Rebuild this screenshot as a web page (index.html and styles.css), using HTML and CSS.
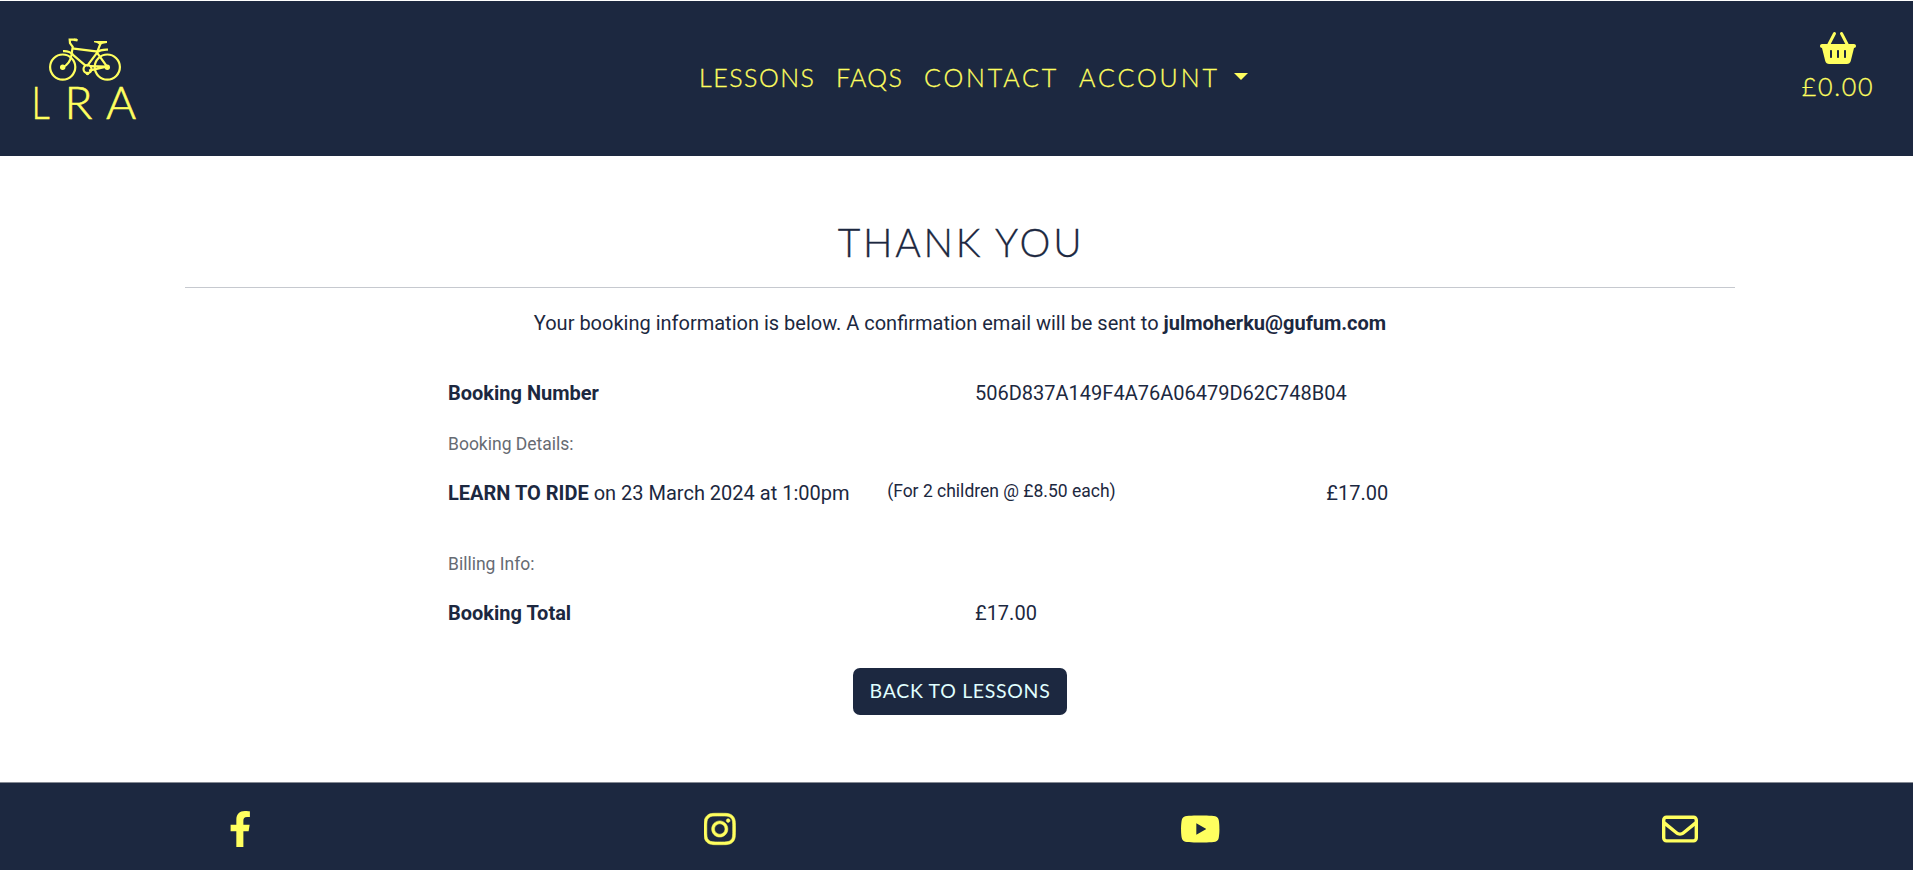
FILE: index.html
```html
<!DOCTYPE html>
<html lang="en">
<head>
<meta charset="utf-8">
<title>Thank You</title>
<link rel="stylesheet" href="styles.css">
</head>
<body>
<header class="header">
  <a class="logo" href="#">
    <svg width="120" height="104" viewBox="30 34 120 104" role="img" aria-label="LRA">
      <g transform="translate(0 -.4)" fill="none" stroke="currentColor" stroke-width="2.200">
        <circle cx="62.700" cy="67.500" r="12.600"/>
        <circle cx="107.300" cy="67.500" r="12.600"/>
        <circle cx="87.500" cy="69.500" r="4"/>
        <path d="M77.500 40.700l-3.500-.7h-4.300l.3 3.500 2.700 3.700-1.200 8c-1 6-4 10.500-9 12.500"/>
        <path d="M72 48.700l26 3.300M71.500 54l14 12M97.500 52.500l-10.500 14M101 42.500l-4 10.500 10 14-18 4M90 66.500l17 .5M63 51.500q6-.5 10 3.500M96 53q5-3.500 12-3"/>
        <path d="M74 39.500h3v1.500h-3z" stroke-width="1"/>
      </g>
      <g fill="currentColor">
        <path d="M94 41h13v2q-5 .3-7 2-3-2.500-6-2.800z"/>
        <circle cx="62.700" cy="67.200" r="2.700"/><circle cx="107.300" cy="67.200" r="2.700"/>
        <circle cx="87.500" cy="73.500" r="1.800"/>
        <g class="logo-text">
          <text transform="translate(31.500 119) scale(.78 1)">L</text>
          <text x="64.500" y="119">R</text>
          <text x="106" y="119">A</text>
        </g>
      </g>
    </svg>
  </a>
  <nav class="nav">
    <a class="w-lessons" href="#">LESSONS</a>
    <a class="w-faqs" href="#">FAQS</a>
    <a class="w-contact" href="#">CONTACT</a>
    <a class="w-account" href="#">ACCOUNT</a>
    <span class="caret"></span>
  </nav>
  <a class="basket" href="#">
    <svg width="36" height="32" viewBox="0 0 576 512" fill="currentColor"><path d="M253.300 35.100c6.100-11.800 1.500-26.300-10.200-32.400s-26.300-1.500-32.400 10.200L117.600 192H32c-17.700 0-32 14.300-32 32s14.300 32 32 32L83.900 463.500C91 492 116.600 512 146 512H430c29.400 0 55-20 62.100-48.500L544 256c17.700 0 32-14.300 32-32s-14.300-32-32-32H458.400L365.300 12.900C359.200 1.200 344.700-3.400 332.900 2.700s-16.300 20.600-10.200 32.400L404.300 192H171.700L253.300 35.100zM192 304v96c0 8.800-7.200 16-16 16s-16-7.200-16-16V304c0-8.800 7.200-16 16-16s16 7.200 16 16zm96-16c8.800 0 16 7.200 16 16v96c0 8.800-7.200 16-16 16s-16-7.200-16-16V304c0-8.800 7.200-16 16-16zm128 16v96c0 8.800-7.200 16-16 16s-16-7.200-16-16V304c0-8.800 7.200-16 16-16s16 7.200 16 16z"/></svg>
    <span>£0.00</span>
  </a>
</header>
<main class="main">
  <h2 class="title">THANK YOU</h2>
  <hr class="rule">
  <p class="intro">Your booking information is below. A confirmation email will be sent to <strong>julmoherku@gufum.com</strong></p>
  <section class="details">
    <div class="row half number"><strong>Booking Number</strong><span>506D837A149F4A76A06479D62C748B04</span></div>
    <p class="label">Booking Details:</p>
    <div class="row lesson"><span><strong>LEARN TO RIDE</strong> on 23 March 2024 at 1:00pm</span><small>(For 2 children @ £8.50 each)</small><span>£17.00</span></div>
    <p class="label">Billing Info:</p>
    <div class="row half"><strong>Booking Total</strong><span>£17.00</span></div>
  </section>
  <a class="button" href="#"><span>BACK TO LESSONS</span></a>
</main>
<footer class="footer">
  <a href="#"><svg height="36" width="22.500" viewBox="0 0 320 512" fill="currentColor"><path d="M279.140 288l14.220-92.660h-88.910v-60.130c0-25.350 12.420-50.060 52.240-50.060h40.420V6.260S260.430 0 225.360 0c-73.220 0-121.080 44.380-121.080 124.720v70.620H22.890V288h81.390v224h100.170V288z"/></svg></a>
  <a href="#"><svg height="36" width="31.500" viewBox="0 0 448 512" fill="currentColor" stroke="currentColor" stroke-width="8"><path d="M224.100 141c-63.600 0-114.900 51.300-114.900 114.900s51.300 114.900 114.900 114.900S339 319.500 339 255.900 287.700 141 224.100 141zm0 189.600c-41.100 0-74.700-33.500-74.700-74.700s33.500-74.700 74.700-74.700 74.700 33.500 74.700 74.700-33.600 74.700-74.700 74.700zm146.400-194.300c0 14.900-12 26.800-26.800 26.800-14.900 0-26.800-12-26.800-26.800s12-26.800 26.800-26.800 26.800 12 26.800 26.800zm76.100 27.200c-1.700-35.900-9.900-67.700-36.200-93.900-26.200-26.200-58-34.400-93.900-36.200-37-2.100-147.900-2.100-184.900 0-35.800 1.700-67.600 9.900-93.900 36.100s-34.400 58-36.200 93.900c-2.100 37-2.100 147.900 0 184.900 1.700 35.900 9.900 67.700 36.200 93.900s58 34.400 93.900 36.200c37 2.100 147.900 2.100 184.900 0 35.900-1.700 67.700-9.900 93.900-36.200 26.200-26.200 34.400-58 36.200-93.900 2.100-37 2.100-147.800 0-184.800zM398.800 388c-7.800 19.600-22.900 34.700-42.600 42.600-29.500 11.700-99.500 9-132.100 9s-102.700 2.600-132.100-9c-19.600-7.800-34.700-22.900-42.600-42.600-11.700-29.500-9-99.500-9-132.100s-2.600-102.700 9-132.100c7.800-19.600 22.900-34.700 42.600-42.600 29.500-11.700 99.500-9 132.100-9s102.700-2.600 132.100 9c19.600 7.800 34.700 22.900 42.600 42.600 11.700 29.500 9 99.500 9 132.100s2.700 102.700-9 132.100z"/></svg></a>
  <a href="#"><svg height="36" width="40.500" viewBox="0 0 576 512" fill="currentColor"><path d="M549.655 124.083c-6.281-23.650-24.787-42.276-48.284-48.597C458.781 64 288 64 288 64S117.220 64 74.629 75.486c-23.497 6.322-42.003 24.947-48.284 48.597-11.412 42.867-11.412 132.305-11.412 132.305s0 89.438 11.412 132.305c6.281 23.650 24.787 41.500 48.284 47.821C117.220 448 288 448 288 448s170.780 0 213.371-11.486c23.497-6.321 42.003-24.171 48.284-47.821 11.412-42.867 11.412-132.305 11.412-132.305s0-89.438-11.412-132.305zm-317.510 213.508V175.185l142.739 81.205-142.739 81.201z"/></svg></a>
  <a href="#"><svg height="36" width="36" viewBox="0 0 512 512" fill="currentColor"><path d="M64 112c-8.800 0-16 7.200-16 16v22.100L220.500 291.700c20.700 17 50.400 17 71.100 0L464 150.100V128c0-8.800-7.200-16-16-16H64zM48 212.200V384c0 8.800 7.200 16 16 16H448c8.800 0 16-7.200 16-16V212.200L322 328.800c-38.400 31.500-93.700 31.500-132 0L48 212.200zM0 128C0 92.700 28.700 64 64 64H448c35.300 0 64 28.700 64 64V384c0 35.300-28.700 64-64 64H64c-35.300 0-64-28.700-64-64V128z"/></svg></a>
</footer>
</body>
</html>
```
FILE: styles.css
```css
* { box-sizing: border-box; }
html { overflow: hidden; }
body { margin: 0; width: 1920px; height: 870px; padding-top: 1px; display: flex; flex-direction: column; background: #fff; color: #1c2840; font: 20px/30px Roboto, sans-serif; overflow: hidden; }
a { color: inherit; text-decoration: none; }
p, h2 { margin: 0; }
.header { height: 155px; flex: none; display: grid; grid-template-columns: 699px 1fr 162px; background: #1c2840; color: #ffff5f; font: 300 25px/32px Lato, sans-serif; }
.logo { padding: 33px 0 0 30px; }
.logo svg { display: block; overflow: visible; }
.logo-text { font: 300 46px Lato, sans-serif; stroke: currentColor; stroke-width: .6px; }
.nav { display: flex; align-items: flex-start; padding-top: 60px; white-space: nowrap; -webkit-text-stroke: .3px currentColor; }
.w-lessons { width: 137px; letter-spacing: 1.500px; }
.w-faqs { width: 88px; letter-spacing: 1.300px; }
.w-contact { width: 155px; letter-spacing: 2.800px; }
.w-account { width: 155px; letter-spacing: 2.900px; }
.caret { margin-top: 12px; border: 7px solid transparent; border-top-color: currentColor; border-bottom: 0; }
.basket { width: 160px; display: flex; flex-direction: column; align-items: center; padding-top: 31px; letter-spacing: 1.700px; -webkit-text-stroke: .3px currentColor; }
.basket span { margin-top: 6px; }
.main { flex: 1; display: flex; flex-direction: column; align-items: center; }
.title { margin-top: 62px; font: 300 39px/48px Lato, sans-serif; letter-spacing: 2.700px; padding-left: 2px; -webkit-text-stroke: .3px currentColor; }
.rule { width: 1550px; height: 1px; margin: 21px 0 20px; border: 0; background: #c6c9cf; }
.intro { line-height: 30px; }
.details { width: 1054px; margin: 40px 0 0 6px; }
.row { display: grid; grid-template-columns: 5fr 5fr 2fr; }
.row > * { padding-left: 12px; }
.half { grid-template-columns: 1fr 1fr; }
strong { font-weight: 700; }
small { font-size: 17.500px; line-height: 26px; }
.label { padding-left: 12px; margin: 21px 0 19px; color: #666b73; font-size: 17.500px; }
.lesson { margin-bottom: 41px; }
.button { width: 214px; height: 47px; margin-top: 40px; border-radius: 7px; display: flex; align-items: center; justify-content: center; background: #1c2840; color: #e0ffff; font: 400 19.500px/30px Lato, sans-serif; letter-spacing: .680px; white-space: nowrap; }
.button span { padding-bottom: 1px; }
.footer { height: 88px; flex: none; display: grid; grid-template-columns: repeat(4, 1fr); border-top: 1px solid #858a94; background: #1c2840; color: #ffff5f; }
.footer a { display: flex; justify-content: center; padding-top: 28px; }
```
